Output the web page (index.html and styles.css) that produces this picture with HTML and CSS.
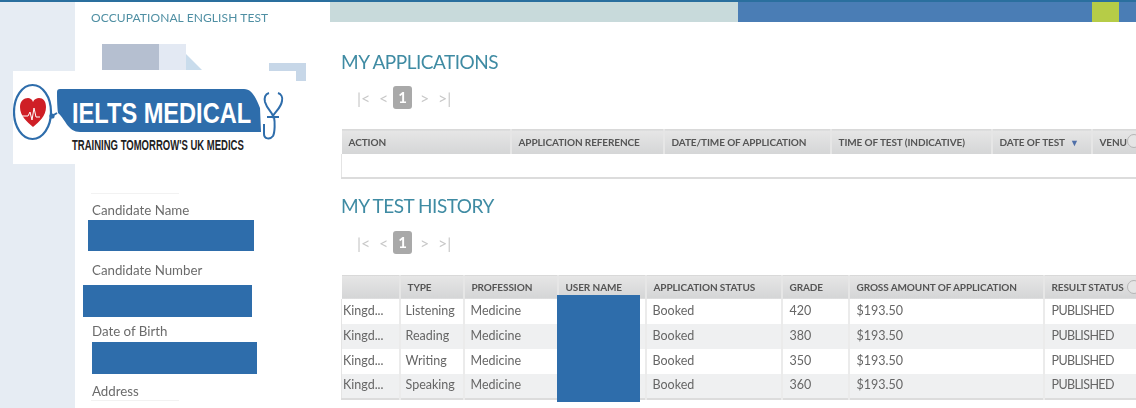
FILE: index.html
```html
<!DOCTYPE html>
<html lang="en">
<head>
<meta charset="utf-8">
<title>My Applications</title>
<link rel="stylesheet" href="styles.css">
</head>
<body>
<div class="page">
  <div class="rail"></div>
  <aside class="side">
    <div class="brand">OCCUPATIONAL ENGLISH TEST</div>
    <div class="art">
      <span class="art-a"></span><span class="art-b"></span><span class="art-c"></span><span class="art-d"></span>
    </div>
    <div class="faint faint-top"></div>
    <div class="field f1">Candidate Name</div>
    <div class="field f2">Candidate Number</div>
    <div class="field f3">Date of Birth</div>
    <div class="field f4">Address</div>
    <div class="faint"></div>
  </aside>
  <main class="main">
    <div class="topbar"><span class="tb-pale"></span><span class="tb-blue"></span><span class="tb-lime"></span><span class="tb-end"></span></div>
    <h2 class="title t1">MY APPLICATIONS</h2>
    <div class="pager"><span class="p1">|&lt;</span><span class="p2">&lt;</span><b class="cur">1</b><span class="p3">&gt;</span><span class="p4">&gt;|</span></div>
    <div class="tablewrap apps">
      <table>
        <colgroup><col class="a1"><col class="a2"><col class="a3"><col class="a4"><col class="a5"><col class="a6"></colgroup>
        <thead><tr><th>ACTION</th><th>APPLICATION REFERENCE</th><th>DATE/TIME OF APPLICATION</th><th>TIME OF TEST (INDICATIVE)</th><th>DATE OF TEST <span class="sort">▼</span></th><th>VENU</th></tr></thead>
        <tbody><tr class="empty"><td colspan="6"></td></tr></tbody>
      </table>
      <span class="knob"></span>
    </div>
    <h2 class="title t2">MY TEST HISTORY</h2>
    <div class="pager"><span class="p1">|&lt;</span><span class="p2">&lt;</span><b class="cur">1</b><span class="p3">&gt;</span><span class="p4">&gt;|</span></div>
    <div class="tablewrap hist">
      <table>
        <colgroup><col class="h1"><col class="h2"><col class="h3"><col class="h4"><col class="h5"><col class="h6"><col class="h7"><col class="h8"></colgroup>
        <thead><tr><th></th><th>TYPE</th><th>PROFESSION</th><th>USER NAME</th><th>APPLICATION STATUS</th><th>GRADE</th><th>GROSS AMOUNT OF APPLICATION</th><th>RESULT STATUS</th></tr></thead>
        <tbody>
          <tr><td>Kingd...</td><td>Listening</td><td>Medicine</td><td></td><td>Booked</td><td>420</td><td>$193.50</td><td>PUBLISHED</td></tr>
          <tr><td>Kingd...</td><td>Reading</td><td>Medicine</td><td></td><td>Booked</td><td>380</td><td>$193.50</td><td>PUBLISHED</td></tr>
          <tr><td>Kingd...</td><td>Writing</td><td>Medicine</td><td></td><td>Booked</td><td>350</td><td>$193.50</td><td>PUBLISHED</td></tr>
          <tr><td>Kingd...</td><td>Speaking</td><td>Medicine</td><td></td><td>Booked</td><td>360</td><td>$193.50</td><td>PUBLISHED</td></tr>
        </tbody>
      </table>
      <span class="knob"></span>
    </div>
  </main>

  <span class="redact r1"></span>
  <span class="redact r2"></span>
  <span class="redact r3"></span>
  <span class="redact r4"></span>

  <svg class="logo" viewBox="13 71 283 93" width="283" height="93" aria-label="IELTS Medical logo">
    <rect x="13" y="71" width="283" height="93" fill="#fff"/>
    <ellipse cx="32.5" cy="112" rx="18.5" ry="27" fill="none" stroke="#2e6dab" stroke-width="2.2"/>
    <path d="M33 127C27 122 20 116 20 107C20 101 24 98 28 98C30 98 32 99 33 102C34 99 37 98 39 98C43 98 46 101 46 107C46 116 39 122 33 127Z" fill="#cf1f26"/>
    <path d="M21 116H28L30 112L32 120L34 108L36 117H40" fill="none" stroke="#fff" stroke-width="1"/>
    <circle cx="52" cy="116" r="2.6" fill="#2e6dab"/>
    <path d="M52 116L57 113" stroke="#2e6dab" stroke-width="2" fill="none"/>
    <path d="M60 89H244C252 89 256 98 260 108L261 132H80C68 132 66 120 58 113C57 105 57 95 57 92C57 90 58 89 60 89Z" fill="#2e6dab"/>
    <text class="logo-main" transform="translate(72 123) scale(.787 1)">IELTS MEDICAL</text>
    <text class="logo-sub" transform="translate(72 150) scale(.68 1)">TRAINING TOMORROW'S UK MEDICS</text>
    <path d="M269 93C265 94 264 98 265 102C267 109 272 112 273 116C275 112 281 108 282 101C283 97 281 94 278 93" fill="none" stroke="#2e6dab" stroke-width="2"/>
    <path d="M267 117H279M274 117C275 122 275 132 273 136C270 140 264 139 264 134V124" fill="none" stroke="#2e6dab" stroke-width="2"/>
  </svg>
</div>
</body>
</html>
```
FILE: styles.css
```css
* { box-sizing: border-box; }
html, body { margin: 0; height: 100%; background: #fff; overflow: hidden; }
body { font-family: "Lato", "Open Sans", sans-serif; color: #666; }

.page { position: relative; display: flex; width: 1136px; height: 408px; overflow: hidden; border-top: 2px solid #2a6f9e; }

.rail { width: 75px; flex: none; background: #e6ecf3; }

.side { width: 255px; flex: none; padding-left: 16px; background: #fff; }
.brand { margin-top: 8px; height: 16px; font-size: 12px; line-height: 16px; color: #4f8fa3; white-space: nowrap; letter-spacing: .1px; filter: blur(.35px); }
.art { position: relative; display: flex; align-items: flex-end; margin: 18px 0 0 11px; height: 26px; }
.art-a { width: 57px; height: 26px; background: #b5bfd0; }
.art-b { width: 27px; height: 26px; background: #e3e9f3; }
.art-c { width: 0; height: 0; border-left: 16px solid #c9dcec; border-top: 16px solid transparent; }
.art-d { position: absolute; left: 167px; top: 19px; width: 37px; height: 18px; background: #c7d7e8; }
.faint { height: 1px; width: 88px; background: #f2f2f2; }
.faint-top { margin-top: 123px; }
.field { padding-left: 1px; font-size: 13.3px; line-height: 18px; height: 18px; color: #6b6b6b; white-space: nowrap; filter: blur(.35px); }
.f1 { margin-top: 7px; }
.f2 { margin-top: 42px; }
.f3 { margin-top: 43px; }
.f4 { margin-top: 42px; }

.main { flex: 1; min-width: 0; }
.topbar { display: flex; height: 20px; }
.tb-pale { width: 408px; background: #c8dadb; }
.tb-blue { width: 354px; background: #4a7db5; }
.tb-lime { width: 27px; background: #b6cc47; }
.tb-end { flex: 1; background: #4a7db5; }

.title { margin: 0 0 0 11px; height: 26px; font-size: 19px; line-height: 26px; font-weight: 400; color: #3f8ba3; white-space: nowrap; letter-spacing: -.5px; filter: blur(.35px); }
.t1 { margin-top: 27px; }
.t2 { margin-top: 14px; }

.pager { display: flex; align-items: center; height: 23px; margin: 11px 0 0 27px; font-size: 16px; color: #c8c8c8; filter: blur(.3px); }
.t2 + .pager { margin-top: 12px; }
.p1 { width: 22px; }
.p2 { width: 14px; }
.cur { width: 19px; height: 23px; border-radius: 3px; background: #a9a9a9; color: #fff; text-align: center; line-height: 23px; font-size: 15px; }
.p3 { margin-left: 8px; width: 18px; }
.p4 { width: 12px; }

.tablewrap { position: relative; margin: 20px 0 0 11px; width: 795px; overflow: hidden; filter: blur(.3px); }
.hist { margin-top: 21px; }
table { width: 100%; table-layout: fixed; border-collapse: collapse; }
th { height: 24px; padding: 0 0 0 7px; text-align: left; font-size: 10px; letter-spacing: -.1px; font-weight: 700; color: #555; white-space: nowrap; overflow: hidden; background: linear-gradient(#e6e6e6, #d4d5d6); border-top: 1px solid #d9d9d9; border-right: 2px solid #e6e6e6; }
td { height: 24.9px; padding: 0 0 2px 6px; font-size: 12.5px; color: #666; white-space: nowrap; overflow: hidden; border-right: 2px solid #ebebeb; }
td:first-child { padding-left: 1px; }
td:nth-child(2) { padding-left: 5px; }
tbody tr:nth-child(even) td { background: #eff0f1; }
tbody { border-bottom: 2px solid #dcdcdc; border-left: 1px solid #e4e4e4; }
.empty td { height: 24px; border-right: 0; }
.sort { margin-left: 3px; font-size: 9px; color: #4f6fa8; }
.knob { position: absolute; right: -5px; top: 5px; width: 14px; height: 14px; border: 1px solid #b5b5b5; border-radius: 50%; background: #e5e5e5; }

.a1 { width: 169px; } .a2 { width: 153px; } .a3 { width: 167px; } .a4 { width: 161px; } .a5 { width: 100px; } .a6 { width: 45px; }
.h1 { width: 58px; } .h2 { width: 64px; } .h3 { width: 94px; } .h4 { width: 88px; } .h5 { width: 136px; } .h6 { width: 67px; } .h7 { width: 195px; } .h8 { width: 93px; }

.hist td:nth-child(n+5), .hist th:nth-child(n+5) { padding-left: 7px; }
.hist td:nth-child(5) { padding-left: 6px; }
.hist td:nth-child(8) { letter-spacing: -.6px; }

.redact { position: absolute; background: #2e6dab; }
.r1 { left: 88px; top: 218px; width: 166px; height: 31px; }
.r2 { left: 83px; top: 283px; width: 169px; height: 32px; }
.r3 { left: 92px; top: 340px; width: 165px; height: 32px; }
.r4 { left: 557px; top: 293px; width: 83px; height: 107px; }

.logo { position: absolute; left: 13px; top: 69px; display: block; }
.logo-main { font-family: "Liberation Sans", sans-serif; font-weight: 700; font-size: 30px; fill: #fff; }
.logo-sub { font-family: "Liberation Sans", sans-serif; font-weight: 700; font-size: 14px; fill: #222; }
```
